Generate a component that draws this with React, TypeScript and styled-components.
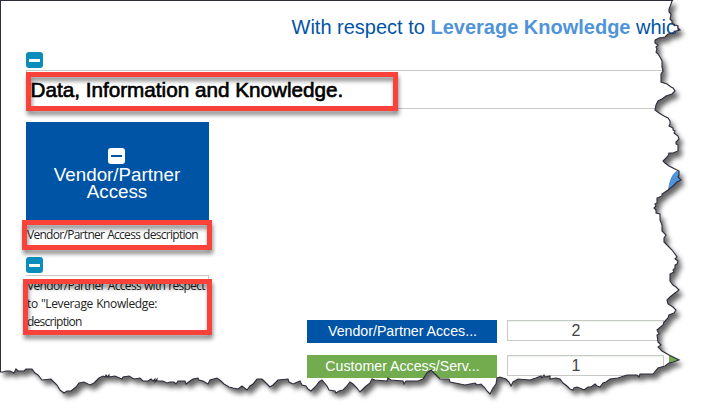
import React from "react";
import styled, { createGlobalStyle } from "styled-components";

const GlobalStyle = createGlobalStyle`
  body { margin: 0; background: #fff; overflow: hidden; }
  * { box-sizing: border-box; }
`;

const Page = styled.main`
  position: relative;
  width: 702px;
  height: 416px;
  overflow: hidden;
  padding: 14px 0 0 26px;
  background: #fff;
  font-family: "Liberation Sans", Arial, sans-serif;
`;

const Title = styled.h1`
  margin: 0 0 0 265.5px;
  height: 38px;
  font-size: 20px;
  line-height: 26px;
  font-weight: 400;
  white-space: nowrap;
  color: #0054a6;
  strong { color: #4f94d9; font-weight: 700; }
`;

const Toggle = styled.span<{ $light?: boolean }>`
  display: flex;
  align-items: center;
  justify-content: center;
  width: 17px;
  height: 16px;
  border-radius: 3px;
  background: ${(p) => (p.$light ? "#fff" : "#0a8dbb")};
  &::before {
    content: "";
    width: 11px;
    height: ${(p) => (p.$light ? "2px" : "3px")};
    background: ${(p) => (p.$light ? "#0054a6" : "#fff")};
  }
`;

const HeadingBar = styled.h2`
  margin: 2px 0 0;
  width: 670px;
  height: 39px;
  padding-left: 3.5px;
  border: 1px solid #c6cbc5;
  font-size: 20.7px;
  line-height: 37px;
  font-weight: 400;
  white-space: nowrap;
  color: #000;
  -webkit-text-stroke: 0.65px #000;
`;

const Body = styled.div`
  display: flex;
  gap: 98px;
  margin-top: 13px;
`;

const Sidebar = styled.section`
  width: 183px;
  flex: none;
`;

const Tile = styled.div`
  display: flex;
  flex-direction: column;
  align-items: center;
  height: 98px;
  padding: 26px 1px 0 0;
  background: #0054a6;
  color: #fff;
  font-size: 18.8px;
  line-height: 17px;
  text-align: center;
  ${Toggle} { margin-right: 2px; }
  p { margin: 2px 0 0; }
`;

const Description = styled.p<{ $boxed?: boolean }>`
  margin: 0;
  padding-left: 1px;
  height: ${(p) => (p.$boxed ? "56px" : "37px")};
  padding-top: ${(p) => (p.$boxed ? "1px" : "6px")};
  border-top: ${(p) => (p.$boxed ? "1px solid #c6cbc5" : "0")};
  border-right: ${(p) => (p.$boxed ? "1px solid #c6cbc5" : "0")};
  margin-top: ${(p) => (p.$boxed ? "2px" : "0")};
  font-family: "Open Sans", "Noto Sans", sans-serif;
  font-size: 12px;
  line-height: 18px;
  white-space: nowrap;
  color: #222;
`;

const Line = styled.span<{ $tracking: number }>`
  display: block;
  letter-spacing: ${(p) => p.$tracking}px;
  word-spacing: 0.5px;
`;

const Results = styled.section`
  display: grid;
  grid-template-columns: 190px 157px 60px;
  column-gap: 10px;
  row-gap: 12px;
  align-content: start;
  padding-top: 198px;
  > :nth-child(3n) { margin-left: -5px; }
`;

const Label = styled.div<{ $color: string }>`
  height: 23px;
  padding-left: 1px;
  background: ${(p) => p.$color};
  color: #fff;
  font-size: 14.2px;
  line-height: 23px;
  text-align: center;
  white-space: nowrap;
`;

const Value = styled.div`
  height: 21px;
  padding-right: 19px;
  border: 1px solid #c6cbc5;
  box-shadow: inset 0 1px 1px #eef2ee;
  font-size: 16px;
  line-height: 20px;
  text-align: center;
  color: #444;
`;

const Callout = styled.div<{ $x: number; $y: number; $w: number; $h: number }>`
  position: absolute;
  left: ${(p) => p.$x}px;
  top: ${(p) => p.$y}px;
  width: ${(p) => p.$w}px;
  height: ${(p) => p.$h}px;
  border: 5px solid #f9423a;
  filter: drop-shadow(1px 4px 2px rgba(0, 0, 0, 0.45));
`;

const TornPaper = styled.svg`
  position: absolute;
  inset: 0;
`;

const rightEdge =
  "673,0 672,1 671,4 669,9 669,12 671,14 670,19 672,21 672,23 675,25 678,26 678,28 680,30 676,31 675,33 668,34 665,37 659,38 655,40 655,43 658,45 656,47 657,49 656,52 658,54 660,57 662,61 662,67 663,71 661,74 661,82 667,84 671,87 673,88 675,91 672,94 666,96 662,99 658,101 656,105 655,110 659,113 664,116 668,118 670,121 670,124 669,126 673,128 673,130 675,131 674,133 678,136 679,139 676,142 676,144 678,145 678,151 673,153 669,153 668,156 663,161 665,163 669,166 673,168 679,171 679,175 678,177 681,180 677,182 673,186 668,190 662,194 662,196 657,198 657,203 655,204 656,206 654,208 656,210 656,213 660,214 660,220 662,225 662,231 666,235 664,238 664,242 668,246 672,250 675,254 677,257 675,259 678,261 677,264 675,265 675,268 673,270 674,272 670,274 670,281 673,285 676,287 679,290 675,293 670,297 667,300 668,304 673,307 676,310 674,313 669,315 668,318 664,322 663,325 657,330 659,334 657,335 658,342 661,345 658,347 662,351 669,355 673,357 679,360 673,362 669,363 665,366 658,368 653,374 640,374 639,377 637,375";
const bottomEdge =
  "627,375 618,378 610,379 606,382 603,383 600,387 597,386 595,384 591,387 588,387 584,390 582,389 577,387 574,388 573,390 570,389 567,386 563,383 560,379 556,378 550,379 550,376 545,377 544,375 542,378 541,376 536,378 530,380 518,379 513,382 511,386 509,382 506,379 500,377 497,378 496,384 493,388 490,394 487,391 485,388 481,384 477,385 475,383 465,385 460,384 450,382 449,379 440,379 437,376 431,370 427,373 423,379 418,381 406,381 404,384 403,381 391,380 388,378 387,381 375,380 372,379 370,383 365,387 360,392 357,388 353,384 350,382 346,387 343,390 339,391 336,393 335,391 329,390 327,386 322,380 319,382 316,386 311,391 308,389 306,386 302,385 300,381 293,384 289,382 288,379 278,380 273,385 270,387 264,381 262,379 257,379 253,384 250,386 247,390 242,386 238,389 233,388 229,387 224,384 221,381 217,378 210,380 208,384 203,381 199,380 198,378 193,379 190,381 186,384 185,381 178,381 176,384 174,382 170,382 167,383 163,381 157,381 157,379 155,382 155,379 153,381 151,379 148,381 143,381 140,378 134,379 129,376 123,377 122,379 115,376 109,377 109,375 107,377 106,375 105,377 103,376 99,378 94,383 90,385 84,382 79,383 76,387 71,391 67,391 64,393 60,390 57,385 51,379 42,380 38,375 35,373 32,369 26,369 24,371 18,371 16,369 14,373 10,371 6,371 3,372 0,372";
const outline = `M1,1 L${rightEdge} ${bottomEdge} Z`;
const outside = `M-2,-2H704V418H-2Z ${outline}`;

function TornEdge() {
  return (
    <TornPaper width="702" height="416" viewBox="0 0 702 416">
      <defs>
        <clipPath id="outside">
          <path d={outside} clipRule="evenodd" />
        </clipPath>
        <filter id="soft" x="-5%" y="-5%" width="110%" height="110%">
          <feGaussianBlur stdDeviation="2.8" />
        </filter>
      </defs>
      <path d="M679,170C672,172 669,181 668,190L683,181Z" fill="#4f94d9" />
      <path d={outside} fill="#fff" fillRule="evenodd" />
      <g clipPath="url(#outside)">
        <path d={outline} transform="translate(4 5)" fill="#000" opacity=".6" filter="url(#soft)" />
      </g>
      <path d={`M${rightEdge} ${bottomEdge}`} fill="none" stroke="#302c3c" strokeWidth="1.1" />
      <path d="M.5,372V.5H673" fill="none" stroke="#302c3c" shapeRendering="crispEdges" />
    </TornPaper>
  );
}

const rows = [
  { label: "Vendor/Partner Acces...", value: 2, color: "#0054a6", end: "transparent" },
  { label: "Customer Access/Serv...", value: 1, color: "#72ac4f", end: "#72ac4f" },
];

export default function App() {
  return (
    <Page>
      <GlobalStyle />
      <Title>
        With respect to <strong>Leverage Knowledge</strong> which
      </Title>
      <Toggle />
      <HeadingBar>Data, Information and Knowledge.</HeadingBar>
      <Body>
        <Sidebar>
          <Tile>
            <Toggle $light />
            <p>
              Vendor/Partner
              <br />
              Access
            </p>
          </Tile>
          <Description>
            <Line $tracking={-0.71}>Vendor/Partner Access description</Line>
          </Description>
          <Toggle />
          <Description $boxed>
            <Line $tracking={-0.67}>Vendor/Partner Access with respect</Line>
            <Line $tracking={-0.38}>to "Leverage Knowledge:</Line>
            <Line $tracking={-0.74}>description</Line>
          </Description>
        </Sidebar>
        <Results>
          {rows.map((row) => (
            <React.Fragment key={row.label}>
              <Label $color={row.color}>{row.label}</Label>
              <Value>{row.value}</Value>
              <Label $color={row.end} />
            </React.Fragment>
          ))}
        </Results>
      </Body>
      <Callout $x={26} $y={72} $w={372} $h={39} />
      <Callout $x={22} $y={220} $w={190} $h={30} />
      <Callout $x={23} $y={279} $w={189} $h={56} />
      <TornEdge />
    </Page>
  );
}
